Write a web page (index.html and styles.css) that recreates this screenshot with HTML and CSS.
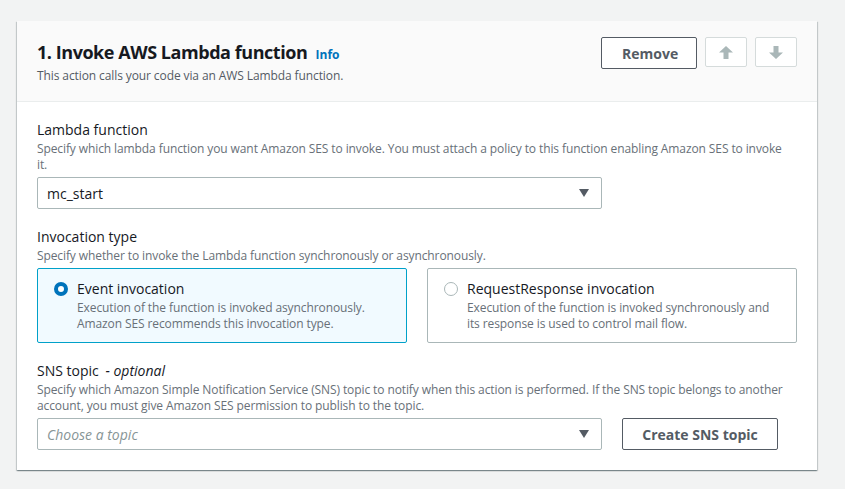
FILE: index.html
```html
<!DOCTYPE html>
<html>
<head>
<meta charset="utf-8">
<link rel="stylesheet" href="styles.css">
</head>
<body>
<div class="page">
  <section class="card">
    <header class="card-header">
      <div class="heading">
        <h2 class="title">1. Invoke AWS Lambda function <a class="info">Info</a></h2>
        <p class="subtitle">This action calls your code via an AWS Lambda function.</p>
      </div>
      <div class="actions">
        <button class="btn">Remove</button>
        <button class="icon-btn" aria-label="Move up">
          <svg width="14" height="13" viewBox="0 0 14 13"><path d="M7 0 L14 6.5 L9.5 6.5 L9.5 13 L4.5 13 L4.5 6.5 L0 6.5 Z" fill="#aab7b8"/></svg>
        </button>
        <button class="icon-btn" aria-label="Move down">
          <svg width="14" height="13" viewBox="0 0 14 13"><path d="M7 13 L14 6.5 L9.5 6.5 L9.5 0 L4.5 0 L4.5 6.5 L0 6.5 Z" fill="#aab7b8"/></svg>
        </button>
      </div>
    </header>
    <div class="card-body">
      <div class="field">
        <div class="label">Lambda function</div>
        <div class="desc">Specify which lambda function you want Amazon SES to invoke. You must attach a policy to this function enabling Amazon SES to invoke it.</div>
        <div class="select"><span>mc_start</span><span class="caret"></span></div>
      </div>
      <div class="field">
        <div class="label">Invocation type</div>
        <div class="desc">Specify whether to invoke the Lambda function synchronously or asynchronously.</div>
        <div class="tiles">
          <div class="tile selected">
            <span class="radio checked"></span>
            <div>
              <div class="tile-title">Event invocation</div>
              <div class="tile-desc">Execution of the function is invoked asynchronously.<br>Amazon SES recommends this invocation type.</div>
            </div>
          </div>
          <div class="tile">
            <span class="radio"></span>
            <div>
              <div class="tile-title">RequestResponse invocation</div>
              <div class="tile-desc">Execution of the function is invoked synchronously and<br>its response is used to control mail flow.</div>
            </div>
          </div>
        </div>
      </div>
      <div class="field last">
        <div class="label">SNS topic <i class="optional">- optional</i></div>
        <div class="desc">Specify which Amazon Simple Notification Service (SNS) topic to notify when this action is performed. If the SNS topic belongs to another account, you must give Amazon SES permission to publish to the topic.</div>
        <div class="row">
          <div class="select"><span class="placeholder">Choose a topic</span><span class="caret"></span></div>
          <button class="btn create">Create SNS topic</button>
        </div>
      </div>
    </div>
  </section>
</div>
</body>
</html>
```

FILE: styles.css
```css
* { box-sizing: border-box; }
html, body {
  margin: 0;
  background: #f2f3f3;
  font-family: "Open Sans", "Noto Sans", sans-serif;
  color: #16191f;
}
.page {
  padding: 21px 28px 19px 17px;
}
.card {
  width: 800px;
  background: #fff;
  box-shadow: 0 1px 1px 0 rgba(0,28,36,.3), 1px 1px 1px 0 rgba(0,28,36,.15), -1px 1px 1px 0 rgba(0,28,36,.15);
}
.card-header {
  background: #fafafa;
  border-bottom: 1px solid #eaeded;
  padding: 16px 20px 17px 20px;
  display: flex;
  justify-content: space-between;
  align-items: flex-start;
}
.title {
  margin: 3px 0 0;
  font-size: 18px;
  line-height: 24px;
  font-weight: 700;
  letter-spacing: -0.45px;
  color: #16191f;
}
.info {
  font-size: 12px;
  font-weight: 700;
  letter-spacing: 0;
  color: #0073bb;
  margin-left: 4px;
}
.subtitle {
  margin: 1px 0 0;
  font-size: 12px;
  line-height: 16px;
  letter-spacing: -0.1px;
  color: #545b64;
}
.actions {
  display: flex;
  gap: 8px;
}
.btn {
  font-family: inherit;
  font-size: 14px;
  font-weight: 700;
  color: #545b64;
  background: #fff;
  border: 1px solid #545b64;
  border-radius: 2px;
  height: 32px;
  padding: 0 20px;
}
.actions .btn { width: 96px; }
.icon-btn {
  width: 42px;
  height: 30px;
  background: #fff;
  border: 1px solid #d5dbdb;
  border-radius: 2px;
  display: flex;
  align-items: center;
  justify-content: center;
  padding: 0;
}
.card-body {
  padding: 17px 20px 20px 20px;
}
.field { margin-bottom: 17px; }
.field.last { margin-bottom: 0; }
.label {
  font-size: 14px;
  line-height: 22px;
  color: #16191f;
}
.optional {
  color: #16191f;
  margin-left: 3px;
}
.desc {
  max-width: 752px;
  font-size: 12px;
  line-height: 16px;
  letter-spacing: -0.1px;
  color: #687078;
  margin-bottom: 4px;
}
.select {
  width: 565px;
  height: 32px;
  border: 1px solid #aab7b8;
  border-radius: 2px;
  background: #fff;
  display: flex;
  align-items: center;
  justify-content: space-between;
  padding: 0 12px 0 9px;
  font-size: 14px;
  color: #16191f;
}
.placeholder {
  font-style: italic;
  color: #879596;
}
.caret {
  width: 0;
  height: 0;
  border-left: 5px solid transparent;
  border-right: 5px solid transparent;
  border-top: 8px solid #545b64;
}
.tiles {
  display: flex;
  gap: 20px;
}
.tile {
  width: 370px;
  height: 75px;
  border: 1px solid #aab7b8;
  border-radius: 2px;
  display: flex;
  gap: 9px;
  padding: 9px 16px 10px;
}
.tile.selected {
  border-color: #00a1c9;
  background: #f1faff;
}
.radio {
  flex: none;
  width: 14px;
  height: 14px;
  border-radius: 50%;
  border: 1px solid #aab7b8;
  margin-top: 4px;
  background: #fff;
}
.radio.checked {
  border: 4px solid #0073bb;
}
.tile-title {
  font-size: 14px;
  line-height: 22px;
  color: #16191f;
}
.tile-desc {
  font-size: 12px;
  line-height: 16px;
  letter-spacing: -0.1px;
  color: #687078;
}
.row {
  display: flex;
  gap: 20px;
  align-items: center;
}
.create {
  width: 156px;
  height: 32px;
  padding: 0;
}
```
